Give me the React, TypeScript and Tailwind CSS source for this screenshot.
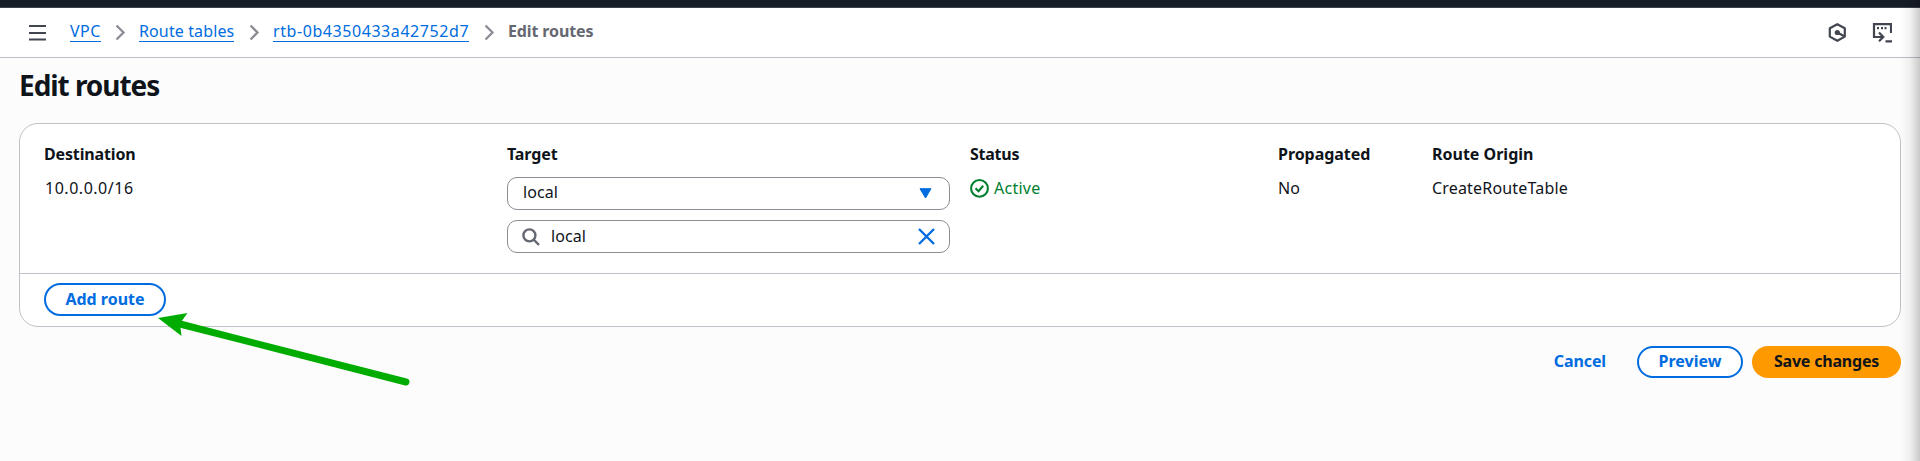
import type { ReactNode } from "react";

function Chevron() {
  return (
    <svg width="11" height="17" viewBox="0 0 11 17" fill="none" stroke="#8c8c94" strokeWidth="2.3">
      <path d="M1.5 1.5 8.5 8.5 1.5 15.5" />
    </svg>
  );
}

function Crumb({ className, children }: { className: string; children: ReactNode }) {
  return (
    <a className={`h-5 shrink-0 whitespace-nowrap border-b border-[#006ce0] leading-[18px] text-[#006ce0] ${className}`}>{children}</a>
  );
}

function TopBar() {
  return (
    <header className="flex h-[50px] items-start border-b border-[#b9bec5] bg-white pl-[29px]">
      <svg className="mt-4" width="17" height="17" viewBox="0 0 17 17" stroke="#424650" strokeWidth="2">
        <path d="M0 2h17M0 9h17M0 15.5h17" />
      </svg>
      <nav className="mt-[14px] flex flex-1 items-start">
        <Crumb className="ml-6 w-[31px] tracking-[0.5px]">VPC</Crumb>
        <span className="ml-[14px] mt-[2px]"><Chevron /></span>
        <Crumb className="ml-[13px] w-[95px] tracking-[0.12px]">Route tables</Crumb>
        <span className="ml-[15px] mt-[2px]"><Chevron /></span>
        <Crumb className="ml-[13px] w-[196px] tracking-[0.57px]">rtb-0b4350433a42752d7</Crumb>
        <span className="ml-[15px] mt-[2px]"><Chevron /></span>
        <span className="ml-[13px] font-bold leading-[18px] tracking-[-0.12px] text-[#656871]">Edit routes</span>
      </nav>
      <div className="mr-7 mt-[15px] flex items-start gap-[26px]">
        <svg width="18" height="19" viewBox="0 0 18 19" fill="none" stroke="#424650" strokeWidth="2.2">
          <path d="M9.3 1.2 16.8 5.2v8.4L9.3 17.8 1.8 13.6V5.2z" strokeLinejoin="round" />
          <circle cx="9.3" cy="9.5" r="2.6" fill="#424650" stroke="none" />
          <path d="M9.3 9.5 15.8 13" />
        </svg>
        <svg width="20" height="20" viewBox="0 0 20 20" fill="none" stroke="#424650" strokeWidth="2.2">
          <path d="M19 10V1.2H2V14H11" />
          <path d="M7 9.5 11.3 14 7 18.2" />
          <path d="M5 5.2h2M9 5.2h2M12.5 5.2h2M13.5 18.4h6.5" />
        </svg>
      </div>
    </header>
  );
}

function Column({ title, tracking, children }: { title: string; tracking: string; children: ReactNode }) {
  return (
    <div className="flex flex-col items-start">
      <div className={`h-[33px] font-bold leading-5 ${tracking}`}>{title}</div>
      {children}
    </div>
  );
}

function RoutesCard() {
  return (
    <section className="h-[204px] w-[1882px] rounded-[19px] border border-[#c0c2c9] bg-white">
      <div className="grid h-[150px] grid-cols-[463px_463px_308px_154px_1fr] border-b border-[#c0c2c9] pl-[24px] pt-[20px]">
        <Column title="Destination" tracking="tracking-[-0.15px]">
          <span className="mt-px pl-px leading-5 tracking-[0.52px]">10.0.0.0/16</span>
        </Column>
        <Column title="Target" tracking="tracking-[-0.1px]">
          <div className="flex flex-col gap-[10px]">
            <div className="flex h-[33px] w-[443px] items-center rounded-[10px] border border-[#8c8c94] pl-[15px] pr-[17px]">
              <span className="mb-[3px] flex-1 leading-5 tracking-[0.1px]">local</span>
              <svg width="13" height="11" viewBox="0 0 13 11" fill="#006ce0" stroke="#006ce0" strokeLinejoin="round">
                <path d="M1 .7h11L6.5 10z" />
              </svg>
            </div>
            <div className="flex h-[33px] w-[443px] items-center rounded-[10px] border border-[#8c8c94] pl-[14px] pr-[14px]">
              <svg width="18" height="18" viewBox="0 0 18 18" fill="none" stroke="#656871" strokeWidth="2.4">
                <circle cx="7.4" cy="7.4" r="6" />
                <path d="m11.7 11.7 5.3 5.3" />
              </svg>
              <span className="mb-[2px] ml-[11px] flex-1 leading-5 tracking-[0.1px]">local</span>
              <svg width="17" height="17" viewBox="0 0 17 17" stroke="#006ce0" strokeWidth="2.4">
                <path d="m1 1 15 15M16 1 1 16" />
              </svg>
            </div>
          </div>
        </Column>
        <Column title="Status" tracking="tracking-[-0.25px]">
          <div className="mt-px flex gap-[5px] text-[#00802f]">
            <svg width="19" height="20" viewBox="0 0 19 20" fill="none" stroke="currentColor" strokeWidth="2.1">
              <circle cx="9.5" cy="10.4" r="8.4" />
              <path d="m5.5 10.2 3 3 4.7-5.4" />
            </svg>
            <span className="leading-5 tracking-[0.25px]">Active</span>
          </div>
        </Column>
        <Column title="Propagated" tracking="tracking-[-0.05px]">
          <span className="mt-px leading-5">No</span>
        </Column>
        <Column title="Route Origin" tracking="tracking-[0px]">
          <span className="mt-px leading-5 tracking-[0.18px]">CreateRouteTable</span>
        </Column>
      </div>
      <div className="pl-6 pt-[9px]">
        <button className="flex h-[33px] w-[122px] items-center justify-center rounded-full border-2 border-[#006ce0] pb-[2px] font-bold leading-5 text-[#006ce0]">
          Add route
        </button>
      </div>
    </section>
  );
}

export default function App() {
  return (
    <div className="relative h-[461px] w-[1920px] overflow-hidden bg-[#fcfcfd] font-['Noto_Sans',sans-serif] text-[16px] text-[#0f141a]">
      <div className="h-2 border-b border-[#3b424b] bg-[#161d26]" />
      <TopBar />
      <main className="pl-[19px] pt-[9px]">
        <h1 className="h-14 text-[28px] font-bold leading-9 tracking-[-1.05px]">Edit routes</h1>
        <RoutesCard />
        <div className="mr-[19px] mt-[19px] flex items-center justify-end text-[#006ce0]">
          <button className="h-8 pb-[2px] font-bold leading-[30px] tracking-[-0.1px]">Cancel</button>
          <button className="ml-[31px] flex h-8 w-[106px] items-center justify-center rounded-full border-2 border-[#006ce0] bg-white pb-[2px] font-bold leading-5">
            Preview
          </button>
          <button className="ml-[9px] flex h-8 w-[149px] items-center justify-center rounded-full bg-[#ff9900] pb-[2px] font-bold leading-5 tracking-[-0.2px] text-[#0f141a]">
            Save changes
          </button>
        </div>
      </main>
      <svg className="pointer-events-none absolute left-[155px] top-[308px]" width="260" height="82" viewBox="155 308 260 82" fill="#00ac00">
        <path d="M180 324 406 382" stroke="#00ac00" strokeWidth="7" strokeLinecap="round" />
        <path d="M158 318 187.5 313 180 323.5 181.5 336z" />
      </svg>
      <div className="pointer-events-none absolute right-0 top-0 h-full w-5 bg-linear-to-r from-transparent via-black/5 to-black/20" />
    </div>
  );
}
